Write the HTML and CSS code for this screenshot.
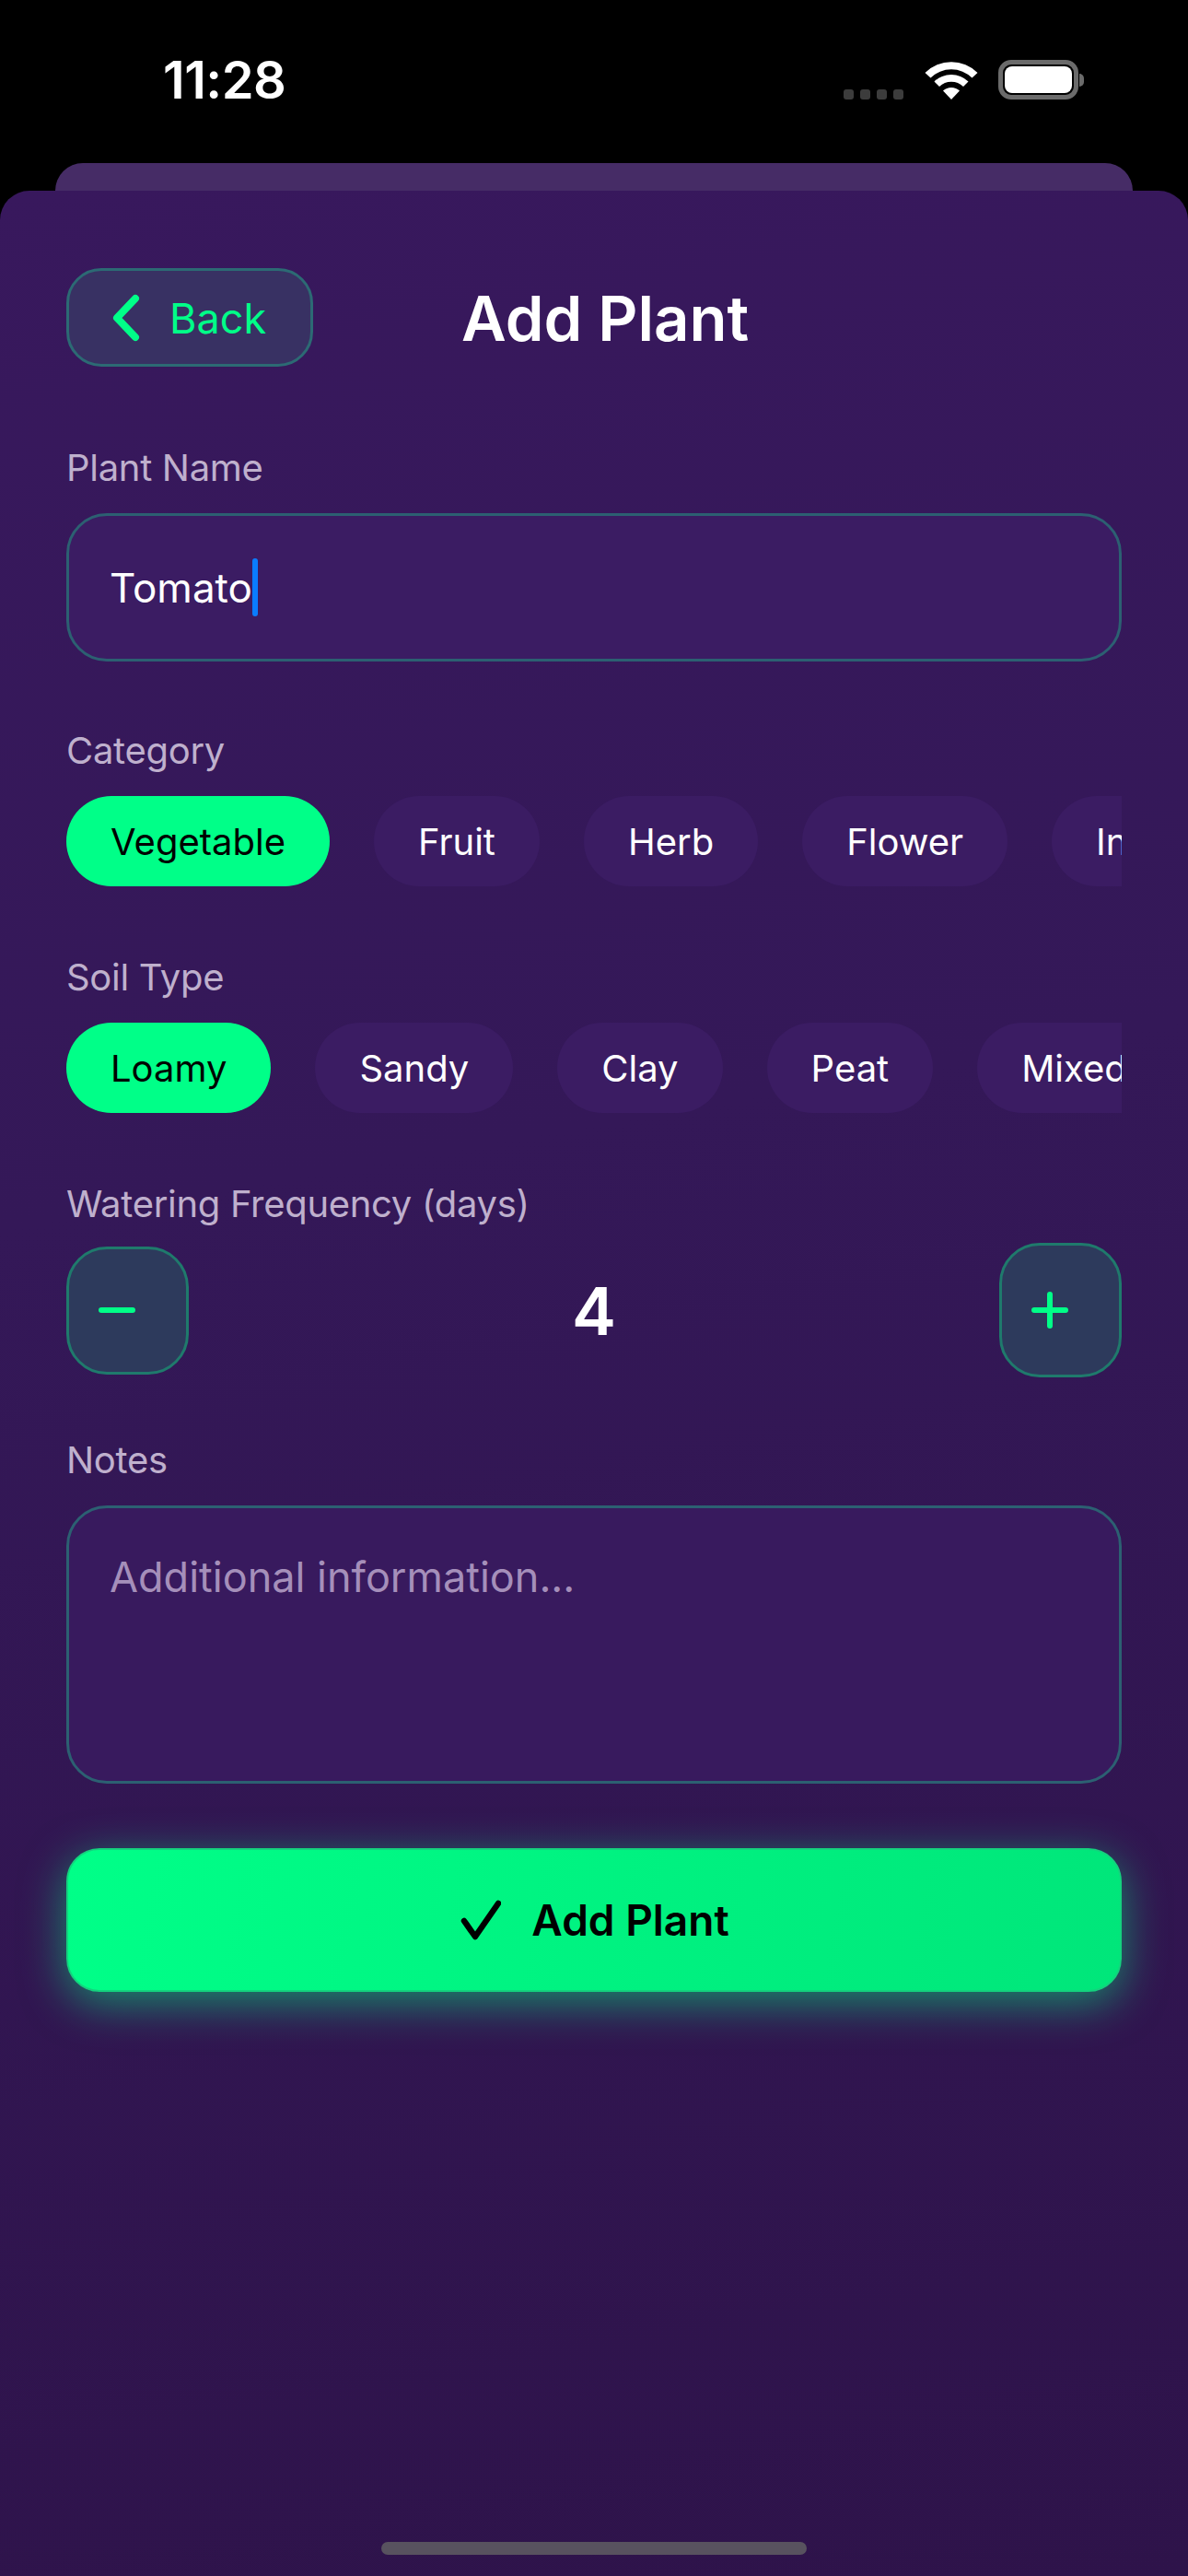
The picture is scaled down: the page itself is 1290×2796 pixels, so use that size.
FILE: index.html
```html
<!DOCTYPE html>
<html lang="en">
<head>
    <meta charset="UTF-8">
    <meta name="viewport" content="width=device-width, initial-scale=1.0">
    <title>Add Plant</title>
    <link rel="stylesheet" href="styles.css">
</head>
<body>
    <div class="phone">
        <div class="status-bar">
            <span class="time">11:28</span>
            <div class="status-icons">
                <div class="signal"><i></i><i></i><i></i><i></i></div>
                <svg class="wifi" width="58" height="42" viewBox="0 0 58 42">
                    <path d="M29 42 L20 32.5 A13 13 0 0 1 38 32.5 Z" fill="#fff"/>
                    <path d="M10.5 22.5 A26.5 26.5 0 0 1 47.500 22.500 L42 28 A19 19 0 0 0 16 28 Z" fill="#fff"/>
                    <path d="M0.500 13 A40.500 40.500 0 0 1 57.500 13 L51.500 18.500 A32 32 0 0 0 6.500 18.500 Z" fill="#fff"/>
                </svg>
                <div class="battery">
                    <div class="battery-body"><div class="battery-level"></div></div>
                    <div class="battery-cap"></div>
                </div>
            </div>
        </div>

        <div class="sheet-behind"></div>

        <main class="sheet">
            <header class="top-row">
                <button class="back-btn" type="button">
                    <svg width="34" height="54" viewBox="0 0 34 54">
                        <path d="M28 6 L8 27 L28 48" fill="none" stroke="#00ff88" stroke-width="8" stroke-linecap="round" stroke-linejoin="round"/>
                    </svg>
                    <span>Back</span>
                </button>
                <h1>Add Plant</h1>
            </header>

            <section class="field field-name">
                <label>Plant Name</label>
                <div class="text-box name-box">Tomato<span class="caret"></span></div>
            </section>

            <section class="field">
                <label>Category</label>
                <div class="chips">
                    <span class="chip active">Vegetable</span>
                    <span class="chip">Fruit</span>
                    <span class="chip">Herb</span>
                    <span class="chip">Flower</span>
                    <span class="chip">Indoor</span>
                </div>
            </section>

            <section class="field">
                <label>Soil Type</label>
                <div class="chips">
                    <span class="chip active">Loamy</span>
                    <span class="chip">Sandy</span>
                    <span class="chip">Clay</span>
                    <span class="chip">Peat</span>
                    <span class="chip">Mixed</span>
                </div>
            </section>

            <section class="field field-stepper">
                <label>Watering Frequency (days)</label>
                <div class="stepper">
                    <button class="step-btn minus" type="button">
                        <svg width="40" height="40" viewBox="0 0 40 40">
                            <path d="M3 20 H37" stroke="#00ff88" stroke-width="6" stroke-linecap="round"/>
                        </svg>
                    </button>
                    <span class="step-value">4</span>
                    <button class="step-btn plus" type="button">
                        <svg width="40" height="40" viewBox="0 0 40 40">
                            <path d="M3 20 H37 M20 3 V37" stroke="#00ff88" stroke-width="6" stroke-linecap="round"/>
                        </svg>
                    </button>
                </div>
            </section>

            <section class="field field-notes">
                <label>Notes</label>
                <div class="text-box notes-box">Additional information...</div>
            </section>

            <button class="submit-btn" type="button">
                <svg width="46" height="44" viewBox="0 0 46 44">
                    <path d="M6 23 L18 40 L43 4" fill="none" stroke="#000" stroke-width="6.500" stroke-linecap="round" stroke-linejoin="round"/>
                </svg>
                <span>Add Plant</span>
            </button>
        </main>

        <div class="home-bar"></div>
    </div>
</body>
</html>
```
FILE: styles.css
```css
* {
    box-sizing: border-box;
}

html, body {
    margin: 0;
    height: 100%;
    background-color: #000;
}

body {
    font-family: Inter, "Noto Sans", sans-serif;
    color: #fff;
}

.phone {
    position: relative;
    display: flex;
    flex-direction: column;
    height: 2796px;
    overflow: hidden;
}

/* status bar */
.status-bar {
    display: flex;
    justify-content: space-between;
    align-items: flex-start;
    height: 177px;
    padding: 57px 113px 0 177px;
}

.time {
    font-size: 56px;
    font-weight: 600;
    line-height: 60px;
    letter-spacing: -0.5px;
}

.status-icons {
    display: flex;
    align-items: flex-end;
    height: 43px;
    margin-top: 8px;
}

.signal {
    display: flex;
    gap: 7px;
    margin-right: 23px;
}

.signal i {
    width: 11px;
    height: 11px;
    border-radius: 3px;
    background-color: #3c3c3c;
}

.wifi {
    margin-right: 22px;
}

.battery {
    display: flex;
    align-items: center;
}

.battery-body {
    width: 87px;
    height: 43px;
    padding: 2px;
    border: 5px solid #6b6b6b;
    border-radius: 14px;
}

.battery-level {
    height: 100%;
    border-radius: 8px;
    background-color: #fff;
}

.battery-cap {
    width: 5px;
    height: 14px;
    margin-left: 1px;
    border-radius: 0 5px 5px 0;
    background-color: #6b6b6b;
}

/* sheets */
.sheet-behind {
    flex: none;
    height: 40px;
    margin: 0 60px -10px;
    border-radius: 30px 30px 0 0;
    background-color: #462c66;
}

.sheet {
    position: relative;
    flex: 1;
    padding: 84px 72px 0;
    border-radius: 32px 32px 0 0;
    background: linear-gradient(170deg, #38185d 0%, #341858 40%, #2e134a 100%);
}

.top-row {
    display: flex;
    align-items: center;
    margin-bottom: 86px;
}

.back-btn {
    display: flex;
    align-items: center;
    gap: 31px;
    width: 268px;
    height: 107px;
    padding: 0 0 0 44px;
    border: 3px solid #2c6a74;
    border-radius: 38px;
    background-color: #383163;
    color: #00ff88;
    font-family: inherit;
    font-size: 45px;
    line-height: 58px;
}

.back-btn span {
    padding-top: 2px;
}

h1 {
    margin: 0 0 0 161px;
    padding-top: 2px;
    font-size: 67px;
    font-weight: 600;
    line-height: 80px;
}

/* form */
.field {
    margin-bottom: 75px;
}

.field-name {
    margin-bottom: 73px;
}

.field-stepper {
    margin-bottom: 66px;
}

.field-notes {
    margin-bottom: 70px;
}

label {
    display: block;
    margin-bottom: 25px;
    color: #bfb0cd;
    font-size: 40px;
    line-height: 48px;
    letter-spacing: -0.3px;
}

.text-box {
    border: 3px solid #2c6072;
    border-radius: 44px;
    background-color: #3b1c63;
}

.name-box {
    display: flex;
    align-items: center;
    height: 161px;
    padding-left: 44px;
    font-size: 44px;
}

.caret {
    width: 6px;
    height: 63px;
    border-radius: 3px;
    background-color: #0a7cff;
}

.notes-box {
    height: 302px;
    padding: 47px 44px;
    background-color: #381a5e;
    color: #a58fba;
    font-size: 45px;
    line-height: 56px;
}

.chips {
    display: flex;
    gap: 48px;
    overflow: hidden;
}

.chip {
    flex: none;
    height: 98px;
    padding: 0 48px;
    border-radius: 49px;
    background-color: #3b1c63;
    font-size: 40px;
    line-height: 100px;
}

.chip.active {
    background-color: #00ff88;
    color: #000;
}

.stepper {
    display: flex;
    justify-content: space-between;
    align-items: center;
    height: 146px;
    margin-top: -7px;
}

.step-btn {
    display: flex;
    align-items: center;
    width: 133px;
    padding: 0 0 0 32px;
    border: 3px solid #1f7a6c;
    border-radius: 44px;
    background-color: #2d3a5c;
}

.step-btn.minus {
    height: 139px;
}

.step-btn.plus {
    height: 146px;
}

.step-value {
    font-size: 72px;
    font-weight: 600;
}

.submit-btn {
    display: flex;
    justify-content: center;
    align-items: center;
    gap: 33px;
    width: 100%;
    height: 156px;
    border: 2px solid #14d27e;
    border-radius: 36px;
    background: linear-gradient(100deg, #00ff88, #00e67a);
    box-shadow: 0 12px 48px rgba(0, 255, 136, 0.5);
    color: #000;
    font-family: inherit;
    font-size: 46px;
    font-weight: 600;
}

.home-bar {
    position: absolute;
    left: 414px;
    bottom: 23px;
    width: 462px;
    height: 14px;
    border-radius: 7px;
    background-color: #58525f;
}
```
